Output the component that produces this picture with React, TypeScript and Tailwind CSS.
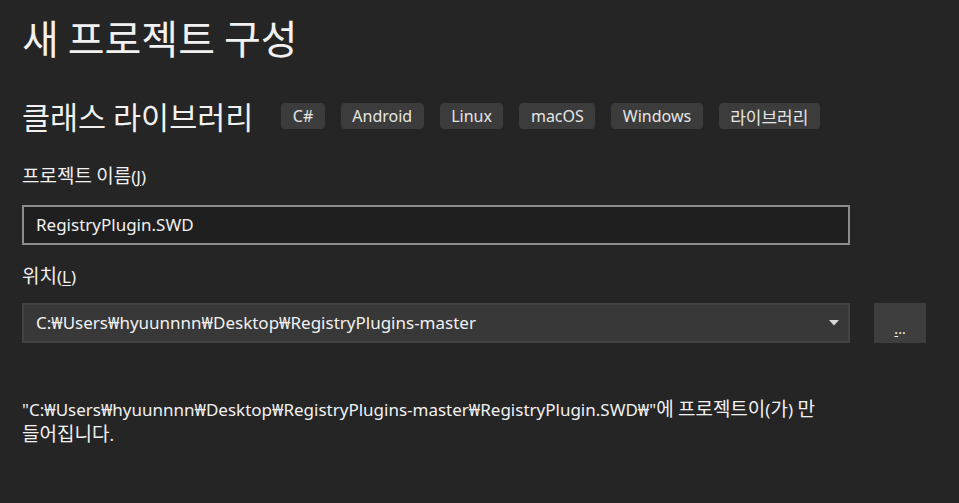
import React from "react";

const font = { fontFamily: '"Noto Sans", "Noto Sans CJK KR", sans-serif' };
const kr = { fontFamily: '"Noto Sans CJK KR", sans-serif' };

function K({ children, size = "text-[19px]" }: { children: React.ReactNode; size?: string }) {
  return (
    <span className={`${size} leading-none`} style={kr}>
      {children}
    </span>
  );
}

function Tag({ children }: { children: React.ReactNode }) {
  return (
    <span className="h-[26px] px-[11.5px] rounded-[4px] bg-[#3c3c3c] text-[#e6e6e6] text-[16px] leading-[26px] flex items-center">
      {children}
    </span>
  );
}

export default function App() {
  return (
    <div
      className="w-[959px] h-[503px] bg-[#252526] text-[#f1f1f1] pl-[22px] pt-[11px] overflow-hidden"
      style={font}
    >
      <h1 className="text-[40px] leading-[52px] font-normal" style={kr}>
        새 프로젝트 구성
      </h1>
      <div className="flex items-center mt-[40px] h-[26px]">
        <h2 className="text-[30.5px] leading-[26px] font-normal mr-[28px]" style={kr}>
          클래스 라이브러리
        </h2>
        <div className="flex gap-[16px]">
          <Tag>C#</Tag>
          <Tag>Android</Tag>
          <Tag>Linux</Tag>
          <Tag>macOS</Tag>
          <Tag>Windows</Tag>
          <Tag>
            <K size="text-[17px]">라이브러리</K>
          </Tag>
        </div>
      </div>
      <div className="mt-[35px] h-[26px] flex items-center text-[17px] leading-[26px]">
        <span>
          <K>프로젝트 이름</K>(<span className="underline underline-offset-2">J</span>)
        </span>
      </div>
      <div className="mt-[15px] w-[828px] h-[40px] border-2 border-[#8c8c8c] bg-[#1f1f1f] flex items-center px-[12px] text-[17px]">
        RegistryPlugin.SWD
      </div>
      <div className="mt-[19px] h-[26px] flex items-center text-[17px] leading-[26px]">
        <span>
          <K>위치</K>(<span className="underline underline-offset-2">L</span>)
        </span>
      </div>
      <div className="mt-[13px] flex items-center">
        <div className="w-[828px] h-[40px] border-2 border-[#434343] bg-[#383838] flex items-center pl-[12px] pr-[9px] text-[17px]">
          <span className="flex-1">C:₩Users₩hyuunnnn₩Desktop₩RegistryPlugins-master</span>
          <svg width="10" height="6" viewBox="0 0 10 6">
            <path d="M0 0 H10 L5 5.5 Z" fill="#d8d8d8" />
          </svg>
        </div>
        <div className="ml-[24px] w-[52px] h-[40px] bg-[#3e3e3e] flex items-end justify-center pb-[7px] text-[14px] leading-[14px]">
          <span>
            <span className="underline underline-offset-2">.</span>..
          </span>
        </div>
      </div>
      <p className="mt-[54px] text-[17px] leading-[25px] text-[#f1f1f1]">
        "C:₩Users₩hyuunnnn₩Desktop₩RegistryPlugins-master₩RegistryPlugin.SWD₩"<K>에 프로젝트이</K>(<K>가</K>) <K>만</K>
        <br />
        <K>들어집니다</K>.
      </p>
    </div>
  );
}
